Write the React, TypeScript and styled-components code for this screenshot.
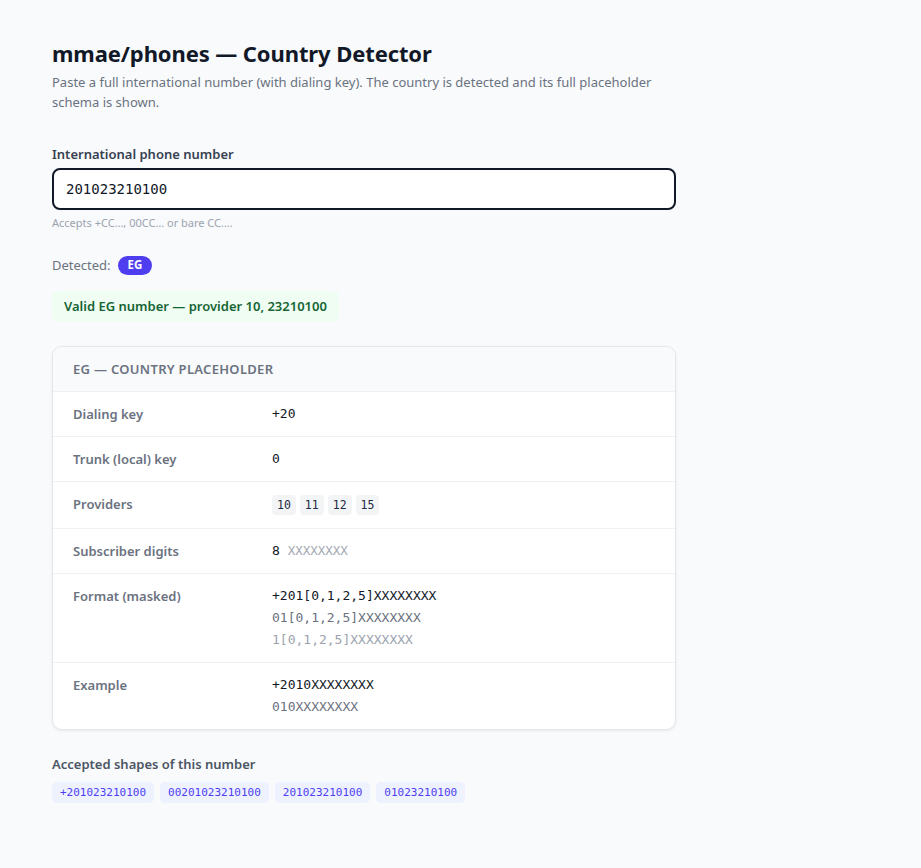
import React from 'react';
import styled, { createGlobalStyle } from 'styled-components';

const SANS = '"Noto Sans", "Open Sans", Arial, sans-serif';
const MONO = '"DejaVu Sans Mono", "Liberation Mono", monospace';

const PROVIDERS = ['10', '11', '12', '15'];
const SHAPES = ['+201023210100', '00201023210100', '201023210100', '01023210100'];

const App: React.FC = () => {
  return (
    <>
      <GlobalStyle />
      <Page>
        <Title>mmae/phones — Country Detector</Title>
        <Subtitle>
          Paste a full international number (with dialing key). The country is detected and its
          full placeholder schema is shown.
        </Subtitle>

        <FieldLabel htmlFor="phone">International phone number</FieldLabel>
        <PhoneInput id="phone" defaultValue="201023210100" autoFocus />
        <Hint>Accepts +CC…, 00CC… or bare CC….</Hint>

        <DetectedRow>
          Detected: <Badge>EG</Badge>
        </DetectedRow>

        <Notice>Valid EG number — provider 10, 23210100</Notice>

        <Card>
          <CardHeader>EG — Country placeholder</CardHeader>

          <Row>
            <RowLabel>Dialing key</RowLabel>
            <Value>+20</Value>
          </Row>
          <Row>
            <RowLabel>Trunk (local) key</RowLabel>
            <Value>0</Value>
          </Row>
          <Row>
            <RowLabel>Providers</RowLabel>
            <ChipList>
              {PROVIDERS.map((p) => (
                <ProviderChip key={p}>{p}</ProviderChip>
              ))}
            </ChipList>
          </Row>
          <Row>
            <RowLabel>Subscriber digits</RowLabel>
            <Value>
              8 <Mask>XXXXXXXX</Mask>
            </Value>
          </Row>
          <Row>
            <RowLabel>Format (masked)</RowLabel>
            <Lines>
              <Value>+201[0,1,2,5]XXXXXXXX</Value>
              <Value $tone="muted">01[0,1,2,5]XXXXXXXX</Value>
              <Value $tone="faint">1[0,1,2,5]XXXXXXXX</Value>
            </Lines>
          </Row>
          <Row>
            <RowLabel>Example</RowLabel>
            <Lines>
              <Value>+2010XXXXXXXX</Value>
              <Value $tone="muted">010XXXXXXXX</Value>
            </Lines>
          </Row>
        </Card>

        <SectionTitle>Accepted shapes of this number</SectionTitle>
        <ShapeList>
          {SHAPES.map((s) => (
            <ShapeChip key={s}>{s}</ShapeChip>
          ))}
        </ShapeList>
      </Page>
    </>
  );
};

const GlobalStyle = createGlobalStyle`
  html, body {
    margin: 0;
    background: #f8fafc;
    font-family: ${SANS};
    color: #111827;
  }
`;

const Page = styled.main`
  width: 624px;
  padding: 38px 0 60px 52px;
  display: flex;
  flex-direction: column;
  align-items: flex-start;
`;

const Title = styled.h1`
  margin: 0;
  font-size: 22px;
  line-height: 30px;
  font-weight: 700;
  color: #111827;
  letter-spacing: -0.1px;
`;

const Subtitle = styled.p`
  margin: 4px 0 0;
  font-size: 13px;
  line-height: 20px;
  color: #6b7280;
`;

const FieldLabel = styled.label`
  margin-top: 33px;
  font-size: 13px;
  line-height: 18px;
  font-weight: 600;
  color: #374151;
`;

const PhoneInput = styled.input`
  box-sizing: border-box;
  margin-top: 5px;
  width: 100%;
  height: 42px;
  padding: 0 12px;
  border: 2px solid #111827;
  border-radius: 8px;
  background: #fff;
  font-family: ${MONO};
  font-size: 14px;
  color: #111827;
  outline: none;
`;

const Hint = styled.div`
  margin-top: 6px;
  font-size: 11px;
  line-height: 14px;
  color: #9ca3af;
`;

const DetectedRow = styled.div`
  margin-top: 25px;
  display: flex;
  align-items: center;
  gap: 7px;
  font-size: 13px;
  line-height: 20px;
  color: #6b7280;
`;

const Badge = styled.span`
  display: inline-flex;
  align-items: center;
  height: 19px;
  padding: 0 10px;
  border-radius: 999px;
  background: #4f3ef0;
  color: #fff;
  font-size: 11.5px;
  font-weight: 700;
`;

const Notice = styled.div`
  margin-top: 16px;
  padding: 6px 12px;
  border-radius: 6px;
  background: #effdf3;
  color: #166534;
  font-size: 13px;
  line-height: 19px;
  font-weight: 600;
`;

const Card = styled.section`
  margin-top: 24px;
  width: 100%;
  box-sizing: border-box;
  background: #fff;
  border: 1px solid #e5e7eb;
  border-radius: 10px;
  box-shadow: 0 1px 3px rgba(15, 23, 42, 0.08);
  overflow: hidden;
`;

const CardHeader = styled.div`
  padding: 13px 20px;
  background: #f8fafc;
  font-size: 13px;
  line-height: 18px;
  font-weight: 600;
  text-transform: uppercase;
  letter-spacing: 0.3px;
  color: #6b7280;
`;

const Row = styled.div`
  display: grid;
  grid-template-columns: 199px 1fr;
  padding: 13px 20px;
  border-top: 1px solid #f0f1f3;
`;

const RowLabel = styled.div`
  font-size: 13px;
  line-height: 18px;
  font-weight: 600;
  color: #6b7280;
`;

const Value = styled.div<{ $tone?: 'muted' | 'faint' }>`
  font-family: ${MONO};
  font-size: 13px;
  line-height: 18px;
  color: ${({ $tone }) =>
    $tone === 'muted' ? '#6b7280' : $tone === 'faint' ? '#9ca3af' : '#111827'};
`;

const Lines = styled.div`
  display: flex;
  flex-direction: column;
  gap: 4px;
`;

const Mask = styled.span`
  font-size: 12.5px;
  color: #a3a8b3;
`;

const ChipList = styled.div`
  display: flex;
  gap: 4px;
  align-items: center;
`;

const ProviderChip = styled.span`
  display: inline-flex;
  align-items: center;
  height: 20px;
  padding: 0 5px;
  border-radius: 4px;
  background: #f3f4f6;
  font-family: ${MONO};
  font-size: 11.5px;
  color: #1f2a44;
`;

const SectionTitle = styled.h2`
  margin: 25px 0 0;
  font-size: 13px;
  line-height: 18px;
  font-weight: 600;
  color: #4b5563;
`;

const ShapeList = styled.div`
  margin-top: 9px;
  display: flex;
  flex-wrap: wrap;
  gap: 6px;
`;

const ShapeChip = styled.span`
  display: inline-flex;
  align-items: center;
  height: 21px;
  padding: 0 8px;
  border-radius: 5px;
  background: #eef2ff;
  font-family: ${MONO};
  font-size: 11px;
  color: #4f3ef0;
`;

export default App;
